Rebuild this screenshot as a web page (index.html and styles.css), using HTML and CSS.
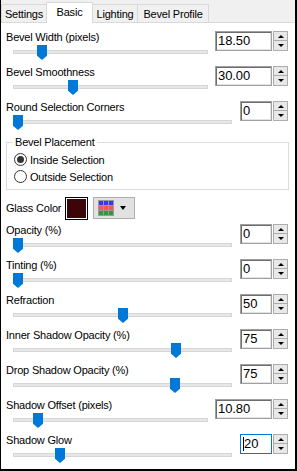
FILE: index.html
```html
<!DOCTYPE html>
<html lang="en">

<head>
  <meta charset="UTF-8">
  <meta name="viewport" content="width=device-width, initial-scale=1.0">
  <title>Inner Bevel - Basic</title>
  <link rel="stylesheet" href="styles.css">
</head>

<body>
  <div class="window">
    <div class="tabs">
      <div class="tab tab-settings">Settings</div>
      <div class="tab tab-basic active">Basic</div>
      <div class="tab tab-lighting">Lighting</div>
      <div class="tab tab-profile">Bevel Profile</div>
    </div>

    <div class="page">
      <div class="row wide">
        <div class="field">
          <div class="label">Bevel Width (pixels)</div>
          <div class="slider"><div class="track"></div><div class="thumb" style="left: 24px"></div></div>
        </div>
        <div class="spin">
          <div class="box">18.50</div>
          <div class="arrows"><span class="up"></span><span class="down"></span></div>
        </div>
      </div>

      <div class="row wide">
        <div class="field">
          <div class="label">Bevel Smoothness</div>
          <div class="slider"><div class="track"></div><div class="thumb" style="left: 55px"></div></div>
        </div>
        <div class="spin">
          <div class="box">30.00</div>
          <div class="arrows"><span class="up"></span><span class="down"></span></div>
        </div>
      </div>

      <div class="row">
        <div class="field">
          <div class="label">Round Selection Corners</div>
          <div class="slider"><div class="track"></div><div class="thumb" style="left: 0px"></div></div>
        </div>
        <div class="spin">
          <div class="box">0</div>
          <div class="arrows"><span class="up"></span><span class="down"></span></div>
        </div>
      </div>

      <fieldset class="group">
        <legend>Bevel Placement</legend>
        <label class="radio"><span class="circle checked"></span>Inside Selection</label>
        <label class="radio"><span class="circle"></span>Outside Selection</label>
      </fieldset>

      <div class="color-row">
        <div class="color-label">Glass Color</div>
        <div class="swatch"><div class="swatch-fill"></div></div>
        <div class="palette">
          <svg width="16" height="16" viewBox="0 0 16 16">
            <rect width="16" height="16" fill="#9a9a9a" />
            <rect x="1" y="1" width="4" height="4" fill="#3535ff" />
            <rect x="6" y="1" width="4" height="4" fill="#3535ff" />
            <rect x="11" y="1" width="4" height="4" fill="#3535ff" />
            <rect x="1" y="6" width="4" height="4" fill="#ff5252" />
            <rect x="6" y="6" width="4" height="4" fill="#ff5252" />
            <rect x="11" y="6" width="4" height="4" fill="#ff5252" />
            <rect x="1" y="11" width="4" height="4" fill="#2f9a3c" />
            <rect x="6" y="11" width="4" height="4" fill="#2f9a3c" />
            <rect x="11" y="11" width="4" height="4" fill="#2f9a3c" />
          </svg>
          <span class="caret-down"></span>
        </div>
      </div>

      <div class="row">
        <div class="field">
          <div class="label">Opacity (%)</div>
          <div class="slider"><div class="track"></div><div class="thumb" style="left: 0px"></div></div>
        </div>
        <div class="spin">
          <div class="box">0</div>
          <div class="arrows"><span class="up"></span><span class="down"></span></div>
        </div>
      </div>

      <div class="row">
        <div class="field">
          <div class="label">Tinting (%)</div>
          <div class="slider"><div class="track"></div><div class="thumb" style="left: 0px"></div></div>
        </div>
        <div class="spin">
          <div class="box">0</div>
          <div class="arrows"><span class="up"></span><span class="down"></span></div>
        </div>
      </div>

      <div class="row">
        <div class="field">
          <div class="label">Refraction</div>
          <div class="slider"><div class="track"></div><div class="thumb" style="left: 105px"></div></div>
        </div>
        <div class="spin">
          <div class="box">50</div>
          <div class="arrows"><span class="up"></span><span class="down"></span></div>
        </div>
      </div>

      <div class="row">
        <div class="field">
          <div class="label">Inner Shadow Opacity (%)</div>
          <div class="slider"><div class="track"></div><div class="thumb" style="left: 158px"></div></div>
        </div>
        <div class="spin">
          <div class="box">75</div>
          <div class="arrows"><span class="up"></span><span class="down"></span></div>
        </div>
      </div>

      <div class="row">
        <div class="field">
          <div class="label">Drop Shadow Opacity (%)</div>
          <div class="slider"><div class="track"></div><div class="thumb" style="left: 157px"></div></div>
        </div>
        <div class="spin">
          <div class="box">75</div>
          <div class="arrows"><span class="up"></span><span class="down"></span></div>
        </div>
      </div>

      <div class="row wide">
        <div class="field">
          <div class="label">Shadow Offset (pixels)</div>
          <div class="slider"><div class="track"></div><div class="thumb" style="left: 20px"></div></div>
        </div>
        <div class="spin">
          <div class="box">10.80</div>
          <div class="arrows"><span class="up"></span><span class="down"></span></div>
        </div>
      </div>

      <div class="row">
        <div class="field">
          <div class="label">Shadow Glow</div>
          <div class="slider"><div class="track"></div><div class="thumb" style="left: 42px"></div></div>
        </div>
        <div class="spin">
          <div class="box focused"><span class="text-caret"></span>20</div>
          <div class="arrows"><span class="up"></span><span class="down"></span></div>
        </div>
      </div>
    </div>
  </div>
</body>

</html>
```

FILE: styles.css
```css
body {
  margin: 0;
  padding: 0;
  background-color: #fff;
  font-family: "Liberation Sans", Arial, sans-serif;
  font-size: 11px;
  letter-spacing: -0.2px;
  color: #000;
}

.window {
  width: 297px;
  height: 471px;
  box-sizing: border-box;
  border-left: 1px solid #000;
  border-right: 2px solid #000;
  border-bottom: 2px solid #000;
  background-color: #f0f0f0;
  display: flex;
  flex-direction: column;
}

/* tab strip */
.tabs {
  height: 24px;
  display: flex;
  align-items: flex-end;
  border-bottom: 1px solid #d9d9d9;
}

.tab {
  height: 18px;
  box-sizing: border-box;
  border: 1px solid #d9d9d9;
  border-bottom: none;
  margin-right: -1px;
  padding-top: 3px;
  line-height: 13px;
  text-align: center;
  white-space: nowrap;
  background-color: #f0f0f0;
}

.tab.active {
  height: 21px;
  margin-bottom: -1px;
  background-color: #fff;
  position: relative;
  z-index: 1;
}

.tab-settings {
  width: 46px;
}

.tab-basic {
  width: 47px;
}

.tab-lighting {
  width: 46px;
}

.tab-profile {
  width: 72px;
}

/* page */
.page {
  flex: 1;
  background-color: #fff;
  padding: 8px 7px 0 5px;
}

.row {
  height: 35px;
  display: flex;
  justify-content: space-between;
}

.field {
  width: 226px;
}

.row.wide .field {
  width: 202px;
}

.label {
  line-height: 13px;
  white-space: nowrap;
}

.slider {
  position: relative;
  height: 16px;
  margin-left: 7px;
}

.track {
  position: absolute;
  left: 0;
  right: 0;
  top: 6px;
  height: 2px;
  border: 1px solid #d6d6d6;
  background-color: #e7e7e7;
}

.thumb {
  position: absolute;
  top: 1px;
  width: 10px;
  height: 15px;
  background-color: #0078d7;
  clip-path: polygon(0 0, 100% 0, 100% 72%, 50% 100%, 0 72%);
}

/* spin boxes */
.spin {
  display: flex;
  gap: 1px;
  height: 20px;
}

.box {
  width: 32px;
  height: 20px;
  box-sizing: border-box;
  border: 1px solid #a0a0a0;
  box-shadow: inset 1px 1px 0 #6d6d6d, inset -1px -1px 0 #e3e3e3;
  padding-left: 2px;
  line-height: 18px;
  font-size: 13px;
  letter-spacing: -0.1px;
  background-color: #fff;
}

.row.wide .box {
  width: 57px;
}

.box.focused {
  border-color: #0078d7;
  box-shadow: none;
}

.text-caret {
  display: inline-block;
  width: 1px;
  height: 14px;
  background-color: #000;
  vertical-align: -3px;
}

.arrows {
  width: 15px;
  display: flex;
  flex-direction: column;
}

.arrows span {
  height: 10px;
  box-sizing: border-box;
  border: 1px solid #adadad;
  background-color: #e8e8e8;
  display: flex;
  justify-content: center;
  align-items: center;
}

.arrows .down {
  border-top: none;
}

.arrows .up::after {
  content: "";
  border-left: 3px solid transparent;
  border-right: 3px solid transparent;
  border-bottom: 3px solid #000;
}

.arrows .down::after {
  content: "";
  border-left: 3px solid transparent;
  border-right: 3px solid transparent;
  border-top: 3px solid #000;
}

/* bevel placement group */
.group {
  width: 283px;
  box-sizing: border-box;
  margin: 0;
  padding: 2px 6px 4px 7px;
  border: 1px solid #dcdcdc;
}

.group legend {
  padding: 0 2px;
  margin-left: -1px;
  line-height: 13px;
}

.radio {
  display: flex;
  align-items: center;
  height: 17px;
}

.circle {
  width: 13px;
  height: 13px;
  box-sizing: border-box;
  border: 1px solid #333;
  border-radius: 50%;
  margin-right: 3px;
  display: flex;
  justify-content: center;
  align-items: center;
}

.circle.checked::after {
  content: "";
  width: 7px;
  height: 7px;
  border-radius: 50%;
  background-color: #333;
}

/* glass color */
.color-row {
  display: flex;
  align-items: center;
  height: 23px;
  margin-top: 7px;
  margin-bottom: 4px;
}

.color-label {
  width: 59px;
  line-height: 13px;
}

.swatch {
  width: 23px;
  height: 23px;
  box-sizing: border-box;
  border: 1px solid #000;
  padding: 1px;
  background-color: #fff;
}

.swatch-fill {
  width: 100%;
  height: 100%;
  background-color: #3c0508;
}

.palette {
  width: 42px;
  height: 22px;
  box-sizing: border-box;
  margin-left: 5px;
  align-self: flex-start;
  border: 1px solid #adadad;
  background-color: #e1e1e1;
  display: flex;
  align-items: center;
  padding-left: 4px;
  gap: 6px;
}

.palette svg {
  display: block;
}

.caret-down {
  border-left: 3.5px solid transparent;
  border-right: 3.5px solid transparent;
  border-top: 4px solid #000;
}
```
